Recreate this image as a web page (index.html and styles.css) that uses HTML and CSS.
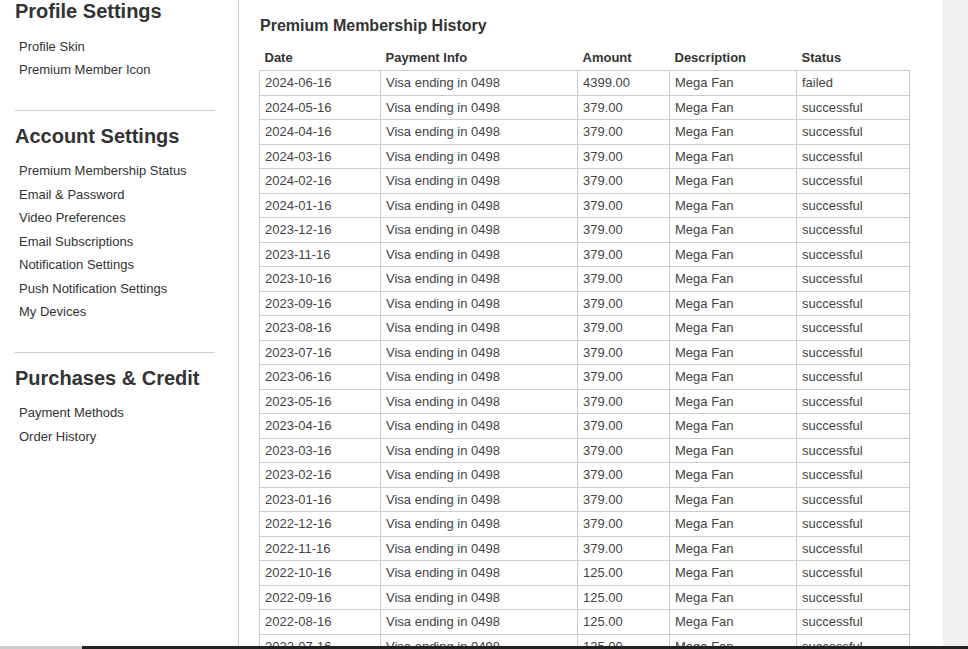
FILE: index.html
```html
<!DOCTYPE html>
<html lang="en">
<head>
    <meta charset="UTF-8">
    <meta name="viewport" content="width=device-width, initial-scale=1.0">
    <title>Premium Membership History</title>
    <link rel="stylesheet" href="styles.css">
</head>
<body>
    <div class="page">
        <div class="sidebar">
            <h2>Profile Settings</h2>
            <ul>
                <li><a href="#">Profile Skin</a></li>
                <li><a href="#">Premium Member Icon</a></li>
            </ul>
            <hr>
            <h2>Account Settings</h2>
            <ul>
                <li><a href="#">Premium Membership Status</a></li>
                <li><a href="#">Email &amp; Password</a></li>
                <li><a href="#">Video Preferences</a></li>
                <li><a href="#">Email Subscriptions</a></li>
                <li><a href="#">Notification Settings</a></li>
                <li><a href="#">Push Notification Settings</a></li>
                <li><a href="#">My Devices</a></li>
            </ul>
            <hr>
            <h2>Purchases &amp; Credit</h2>
            <ul>
                <li><a href="#">Payment Methods</a></li>
                <li><a href="#">Order History</a></li>
            </ul>
        </div>

        <div class="main">
            <h3>Premium Membership History</h3>
            <table class="history">
                <colgroup>
                    <col class="c-date">
                    <col class="c-pay">
                    <col class="c-amount">
                    <col class="c-desc">
                    <col class="c-status">
                </colgroup>
                <thead>
                    <tr><th>Date</th><th>Payment Info</th><th>Amount</th><th>Description</th><th>Status</th></tr>
                </thead>
                <tbody id="rows"></tbody>
            </table>
        </div>
    </div>
    <div class="scrollbar"><span class="scroll-track"></span><span class="scroll-thumb"></span></div>

    <script>
        // monthly charges, newest first
        const rows = [
            ['2024-06-16', '4399.00', 'failed'],
            ['2024-05-16', '379.00'], ['2024-04-16', '379.00'], ['2024-03-16', '379.00'],
            ['2024-02-16', '379.00'], ['2024-01-16', '379.00'], ['2023-12-16', '379.00'],
            ['2023-11-16', '379.00'], ['2023-10-16', '379.00'], ['2023-09-16', '379.00'],
            ['2023-08-16', '379.00'], ['2023-07-16', '379.00'], ['2023-06-16', '379.00'],
            ['2023-05-16', '379.00'], ['2023-04-16', '379.00'], ['2023-03-16', '379.00'],
            ['2023-02-16', '379.00'], ['2023-01-16', '379.00'], ['2022-12-16', '379.00'],
            ['2022-11-16', '379.00'], ['2022-10-16', '125.00'], ['2022-09-16', '125.00'],
            ['2022-08-16', '125.00'], ['2022-07-16', '125.00'], ['2022-06-16', '125.00']
        ];
        const body = document.getElementById('rows');
        body.innerHTML = rows.map(r => `<tr><td>${r[0]}</td><td>Visa ending in 0498</td><td>${r[1]}</td><td>Mega Fan</td><td>${r[2] || 'successful'}</td></tr>`).join('');
    </script>
</body>
</html>
```

FILE: styles.css
```css
body { margin: 0; background: #f0f0f0; font-family: "Liberation Sans", Arial, sans-serif; color: #333; height: 649px; overflow: hidden; }
.page { display: flex; width: 943px; background: #fff; min-height: 100%; }
.sidebar { width: 223px; padding-left: 15px; border-right: 1px solid #ccc; flex-shrink: 0; }
.sidebar h2 { font-size: 20px; line-height: 23px; margin: 14px 0 11.5px; color: #333; }
.sidebar h2:first-child { margin-top: 0; }
.sidebar ul { list-style: none; margin: 0; padding: 0 0 0 4px; }
.sidebar li { font-size: 13px; line-height: 23.5px; }
.sidebar a { color: #333; text-decoration: none; }
.sidebar hr { width: 200px; margin: 28px 0 0; border: 0; border-top: 1px solid #ccc; }
.main { flex: 1; padding: 16px 0 0 20px; }
.main h3 { font-size: 16px; line-height: 20px; margin: 0 0 10px 1px; color: #333; }
.history { border-collapse: collapse; table-layout: fixed; width: 650px; font-size: 13px; color: #444; }
.c-date { width: 121px; }
.c-pay { width: 197px; }
.c-amount { width: 92px; }
.c-desc { width: 127px; }
.c-status { width: 113px; }
.history th { text-align: left; font-weight: bold; color: #333; padding: 4px 5px; line-height: 16px; }
.history td { border: 1px solid #ccc; padding: 4px 5px; line-height: 15.5px; white-space: nowrap; }
.scrollbar { position: fixed; left: 0; right: 0; bottom: 0; height: 3px; display: flex; }
.scroll-track { width: 82px; background: #ccc; }
.scroll-thumb { flex: 1; background: #222; }
```
